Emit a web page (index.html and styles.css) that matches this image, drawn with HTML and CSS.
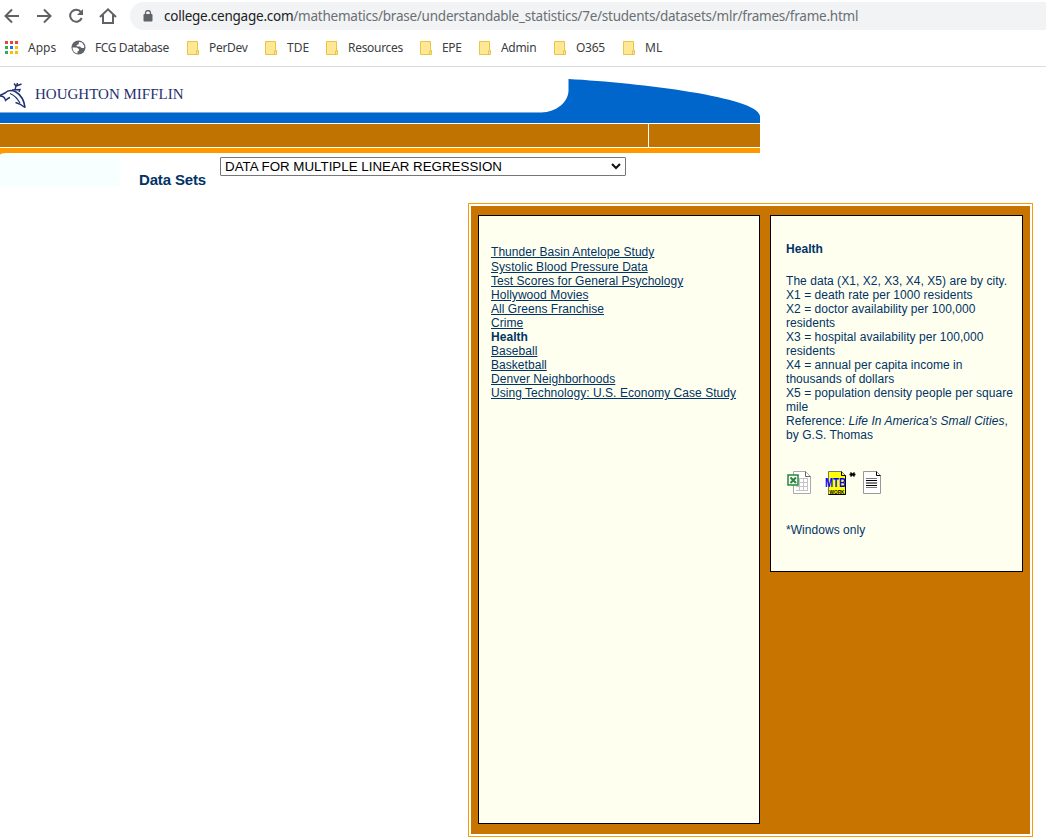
FILE: index.html
```html
<!DOCTYPE html>
<html lang="en">
<head>
<meta charset="utf-8">
<title>Data Sets</title>
<link rel="stylesheet" href="styles.css">
</head>
<body>
<header class="browser">
  <div class="toolbar">
    <svg class="nav-icons" width="130" height="32" viewBox="0 0 130 32" fill="none" stroke="#5f6368" stroke-width="2">
      <path d="M19 16H6M12 9.500L5.500 16L12 22.500"/>
      <path d="M37 16H50M44 9.500L50.500 16L44 22.500"/>
      <path d="M81 12.200A6 6 0 1 0 81.700 18"/>
      <path d="M83 9V15H77Z" fill="#5f6368" stroke="none"/>
      <path d="M100 17L108 9.300L116 17M103 15V23H113V15"/>
    </svg>
    <div class="address">
      <svg class="lock" width="10" height="12" viewBox="0 0 10 12"><path d="M2.500 5V3A2.500 2.500 0 0 1 7.500 3V5" fill="none" stroke="#5f6368" stroke-width="1.300"/><rect x=".5" y="4" width="9" height="7.500" rx="1" fill="#5f6368"/></svg>
      <span class="host">college.cengage.com</span><span class="path">/mathematics/brase/understandable_statistics/7e/students/datasets/mlr/frames/frame.html</span>
    </div>
  </div>
  <nav class="bookmarks">
    <span class="mark wide"><svg width="15" height="15" viewBox="0 0 15 15"><path d="M1 1h3v3H1zM6 1h3v3H6zM11 1h3v3h-3z" fill="#ea4335"/><path d="M1 6h3v3H1zM1 11h3v3H1z" fill="#34a853"/><path d="M6 6h3v3H6z" fill="#1a73e8"/><path d="M11 6h3v3h-3zM6 11h3v3H6zM11 11h3v3h-3z" fill="#fbbc04"/></svg><span>Apps</span></span>
    <span class="mark wide"><svg width="15" height="15" viewBox="0 0 15 15"><circle cx="7.500" cy="7.500" r="7" fill="#5f6368"/><path d="M1.500 7.500H5.500L8 9V10.500L6.500 11.500V13.500C3.500 13 1.500 11 1.500 7.500ZM8 2L11 2.500L13.300 6L13 8L10.500 8L9 6.500H6L5.500 5L7.500 4.500Z" fill="#fff"/></svg><span class="tight">FCG Database</span></span>
    <span class="mark"><svg width="12" height="14" viewBox="0 0 12 14"><path d="M.5.500H10.500V9.500H11.500V13.500H.5Z" fill="#ffe793" stroke="#e8c547"/><path d="M9.500 13V10h2" fill="none" stroke="#e8c547"/></svg><span class="tight">PerDev</span></span>
    <span class="mark"><svg width="12" height="14" viewBox="0 0 12 14"><path d="M.5.500H10.500V9.500H11.500V13.500H.5Z" fill="#ffe793" stroke="#e8c547"/><path d="M9.500 13V10h2" fill="none" stroke="#e8c547"/></svg><span>TDE</span></span>
    <span class="mark"><svg width="12" height="14" viewBox="0 0 12 14"><path d="M.5.500H10.500V9.500H11.500V13.500H.5Z" fill="#ffe793" stroke="#e8c547"/><path d="M9.500 13V10h2" fill="none" stroke="#e8c547"/></svg><span class="tight">Resources</span></span>
    <span class="mark"><svg width="12" height="14" viewBox="0 0 12 14"><path d="M.5.500H10.500V9.500H11.500V13.500H.5Z" fill="#ffe793" stroke="#e8c547"/><path d="M9.500 13V10h2" fill="none" stroke="#e8c547"/></svg><span class="tight">EPE</span></span>
    <span class="mark"><svg width="12" height="14" viewBox="0 0 12 14"><path d="M.5.500H10.500V9.500H11.500V13.500H.5Z" fill="#ffe793" stroke="#e8c547"/><path d="M9.500 13V10h2" fill="none" stroke="#e8c547"/></svg><span class="tight">Admin</span></span>
    <span class="mark"><svg width="12" height="14" viewBox="0 0 12 14"><path d="M.5.500H10.500V9.500H11.500V13.500H.5Z" fill="#ffe793" stroke="#e8c547"/><path d="M9.500 13V10h2" fill="none" stroke="#e8c547"/></svg><span class="tight">O365</span></span>
    <span class="mark"><svg width="12" height="14" viewBox="0 0 12 14"><path d="M.5.500H10.500V9.500H11.500V13.500H.5Z" fill="#ffe793" stroke="#e8c547"/><path d="M9.500 13V10h2" fill="none" stroke="#e8c547"/></svg><span>ML</span></span>
  </nav>
</header>

<div class="masthead">
  <div class="brand">
    <svg class="swoosh" width="760" height="56" viewBox="0 0 760 56"><path d="M0 45.500H541C557 45 568 35 568.500 24V12C640 16 758 30 760 49V56H0Z" fill="#0066cc"/><path d="M0 45.500H541" stroke="#76b0e4" fill="none"/></svg>
    <svg class="dolphin" width="28" height="28" viewBox="0 0 28 28" fill="none" stroke="#1f3070">
      <path d="M0 13.500C2 12 4 11.500 5 11C8 8 12 8 16 10C21 13 24 18 25 25.500" stroke-width="1.600"/>
      <path d="M25 25.500C22 23 19.500 21.500 15.500 20.500M0 14C3 14 5 15.500 5.500 18.500C7 17 8 16 10 15.500M10 11.500C14 13 17 16 20 21" stroke-width="1.300"/>
      <path d="M14 1.500L16 4L15 8M15 4.500L21.500 2M17.500 1L16.500 4M12 8L20 7.500L19 10" stroke-width="1.400"/>
    </svg>
    <span class="brand-name">HOUGHTON MIFFLIN</span>
  </div>
  <div class="strip"><div class="strip-main"></div><div class="strip-side"></div></div>
  <div class="rule"></div>
</div>

<div class="selector">
  <div class="corner-back"><div class="corner"></div></div>
  <strong class="heading">Data Sets</strong>
  <div class="select"><span>DATA FOR MULTIPLE LINEAR REGRESSION</span><svg width="10" height="7" viewBox="0 0 10 7"><path d="M1 1L5 5L9 1" fill="none" stroke="#111" stroke-width="2"/></svg></div>
</div>

<main class="frame">
  <div class="board">
    <section class="panel list">
      <a class="first" href="#">Thunder Basin Antelope Study</a>
      <a href="#">Systolic Blood Pressure Data</a>
      <a href="#">Test Scores for General Psychology</a>
      <a href="#">Hollywood Movies</a>
      <a href="#">All Greens Franchise</a>
      <a href="#">Crime</a>
      <strong>Health</strong>
      <a href="#">Baseball</a>
      <a href="#">Basketball</a>
      <a href="#">Denver Neighborhoods</a>
      <a href="#">Using Technology: U.S. Economy Case Study</a>
    </section>
    <section class="panel detail">
      <strong>Health</strong>
      <p class="desc">The data (X1, X2, X3, X4, X5) are by city.<br>X1 = death rate per 1000 residents<br>X2 = doctor availability per 100,000<br>residents<br>X3 = hospital availability per 100,000<br>residents<br>X4 = annual per capita income in<br>thousands of dollars<br>X5 = population density people per square<br>mile<br>Reference: <em>Life In America's Small Cities</em>,<br>by G.S. Thomas</p>
      <div class="files">
        <svg width="25" height="24" viewBox="0 0 25 24"><path d="M6.500.500H18.500L23.500 5.500V22.500H6.500Z" fill="#fff" stroke="#aaa"/><path d="M18.500.500V5.500H23.500" fill="none" stroke="#666"/><path d="M13 7.500H21M12 11.500H21M9 15.500H21M9 19.500H21M12.500 7V20M16.500 7V20M20.500 7V20" stroke="#c4c4c4"/><rect x="1" y="4" width="10" height="10" fill="#fff" stroke="#27863b" stroke-width="1.500"/><path d="M3.500 6.500L9 12M9 6.500L3.500 12" stroke="#27863b" stroke-width="2"/></svg>
        <svg class="mtb" width="31" height="25" viewBox="0 0 31 25"><path d="M3.500.500H16.500L20.500 4.500V23.500H3.500Z" fill="#ff0" stroke="#777"/><path d="M16.500.500V4.500H20.500V23.500H3.500" fill="none" stroke="#000"/><text x="0" y="15.500" class="mtb-name" textLength="21" lengthAdjust="spacingAndGlyphs">MTB</text><text x="4.500" y="22.500" class="mtb-work" textLength="15" lengthAdjust="spacingAndGlyphs">WORK</text><path d="M24.500 3.500H30.500M25.500 1.500L29.500 5.500M29.500 1.500L25.500 5.500" stroke="#000" stroke-width="1.400"/></svg>
        <svg class="txt" width="19" height="24" viewBox="0 0 19 24"><path d="M.5.500H13.500L17.500 4.500V22.500H.5Z" fill="#fff" stroke="#999"/><path d="M13.500.500V4.500H17.500" fill="none" stroke="#000"/><path d="M3 7.500H14M3 16.500H14" stroke="#777"/><path d="M3 9.500H14M3 12H14M3 14.500H14" stroke="#000"/></svg>
      </div>
      <p class="note">*Windows only</p>
    </section>
  </div>
</main>
</body>
</html>
```

FILE: styles.css
```css
* { box-sizing: border-box; }
body { margin: 0; width: 1046px; height: 840px; overflow: hidden; background: #fff; font-family: "Liberation Sans", Arial, sans-serif; color: #003366; }
svg { display: block; flex: none; }
p { margin: 0; }
.browser { height: 67px; border-bottom: 1px solid #dadce0; font-family: "Noto Sans", sans-serif; }
.toolbar { display: flex; height: 32px; }
.nav-icons { flex: none; }
.address { display: flex; align-items: center; flex: 1; height: 28px; margin-top: 2px; padding-left: 13px; background: #f1f3f4; border-radius: 14px 0 0 14px; font-size: 13.5px; letter-spacing: -.24px; white-space: nowrap; color: #6b6f73; }
.lock { margin-right: 11px; }
.host { color: #202124; }
.bookmarks { display: grid; grid-template-columns: 67px 116px 78px 61px 94px 59px 75px 69px auto; padding-left: 4px; height: 31px; align-items: center; font-size: 12px; color: #3c4043; white-space: nowrap; }
.mark { display: flex; align-items: center; gap: 10px; }
.wide { gap: 9px; }
.tight { letter-spacing: -.4px; }
.mark:nth-child(n+3) .tight { letter-spacing: -.3px; }

.masthead { width: 760px; height: 86px; }
.brand { position: relative; height: 56px; display: flex; align-items: flex-start; }
.swoosh { position: absolute; left: 0; top: 0; }
.dolphin { position: relative; margin-top: 15px; }
.brand-name { position: relative; margin: 17px 0 0 7px; font: 15px/20px "Liberation Serif", serif; color: #1f3070; white-space: nowrap; }
.strip { display: grid; grid-template-columns: 648px 111px; gap: 1px; height: 24px; padding-top: 1px; }
.strip-main, .strip-side { background: #c07300; }
.rule { height: 5px; margin-top: 1px; background: #ff9900; }

.selector { display: flex; align-items: flex-start; height: 50px; }
.corner-back { background: linear-gradient(#ff9900, #ff9900) 0 0 / 6px 2px no-repeat; }
.corner { width: 120px; height: 34px; background: #f7ffff; border-top-left-radius: 6px 2px; }
.heading { margin: 18px 0 0 19px; width: 81px; font-size: 15px; line-height: 18px; letter-spacing: -.15px; white-space: nowrap; }
.select { display: flex; align-items: center; justify-content: space-between; width: 406px; height: 19px; margin-top: 4px; padding: 0 4px 0 4px; border: 1px solid #767676; border-radius: 1px; font-size: 13.333px; line-height: 15px; color: #000; white-space: nowrap; }

.frame { width: 565px; height: 634px; margin-left: 468px; padding: 2px; border: 1px solid #ff9900; }
.board { display: flex; align-items: flex-start; gap: 10px; height: 100%; padding: 9px 7px; background: #c87400; }
.panel { border: 1px solid #000; background: #fffff0; font-size: 12px; line-height: 14px; letter-spacing: .045px; white-space: nowrap; }
.list { display: flex; flex-direction: column; align-items: flex-start; width: 282px; height: 609px; padding: 29px 12px; }
.list a { color: inherit; }
.list .first { height: 15px; }
.detail { width: 253px; height: 357px; padding: 26px 15px; }
.detail strong { display: block; }
.desc { margin-top: 18px; }
.files { display: flex; margin: 29px 0 0 1px; height: 25px; }
.mtb { margin-left: 13px; }
.txt { margin-left: 7px; }
.mtb-name { font: bold 13px "Liberation Sans", sans-serif; fill: #00f; }
.mtb-work { font: bold 6px "Liberation Sans", sans-serif; fill: #000; }
.note { margin-top: 27px; }
```
